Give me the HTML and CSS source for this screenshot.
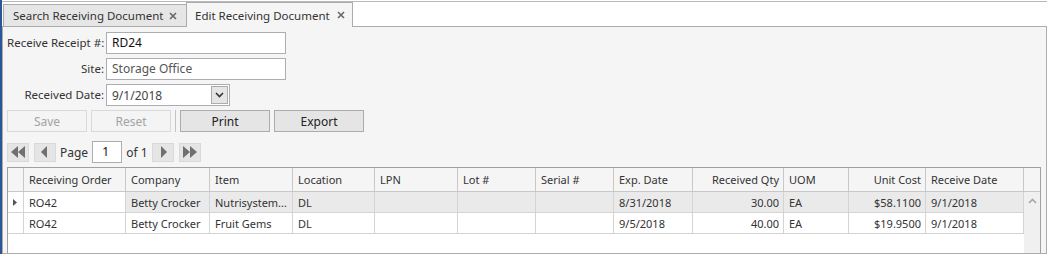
FILE: index.html
```html
<!DOCTYPE html>
<html>
<head>
<meta charset="utf-8">
<link rel="stylesheet" href="styles.css">
</head>
<body>
<div class="app">
  <div class="tabstrip">
    <div class="tab"><span class="tab-title">Search Receiving Document</span>
      <svg class="close" width="8" height="8" viewBox="0 0 8 8"><path d="M1 1L7 7M7 1L1 7" stroke="#666" stroke-width="1.6"/></svg>
    </div>
    <div class="tab active"><span class="tab-title">Edit Receiving Document</span>
      <svg class="close" width="8" height="8" viewBox="0 0 8 8"><path d="M1 1L7 7M7 1L1 7" stroke="#666" stroke-width="1.6"/></svg>
    </div>
  </div>
  <div class="panel">
    <div class="form">
      <label class="lbl">Receive Receipt #:</label>
      <div class="input">RD24</div>
      <label class="lbl">Site:</label>
      <div class="input ro">Storage Office</div>
      <label class="lbl">Received Date:</label>
      <div class="combo">
        <span class="combo-text">9/1/2018</span>
        <span class="dd"><svg width="9" height="6" viewBox="0 0 9 6"><path d="M1 1L4.5 4.5L8 1" fill="none" stroke="#333" stroke-width="1.6"/></svg></span>
      </div>
    </div>
    <div class="toolbar">
      <button class="btn" disabled>Save</button>
      <button class="btn" disabled>Reset</button>
      <span class="sep"></span>
      <button class="btn wide">Print</button>
      <button class="btn wide">Export</button>
    </div>
    <div class="pager">
      <span class="pbtn"><svg width="16" height="12" viewBox="0 0 16 12"><path d="M8 0V12L1 6Z M15 0V12L8 6Z" fill="#707070"/></svg></span>
      <span class="pbtn"><svg width="10" height="12" viewBox="0 0 10 12"><path d="M7 0V12L1 6Z" fill="#707070"/></svg></span>
      <span class="ptext">Page</span>
      <span class="pinput">1</span>
      <span class="ptext">of 1</span>
      <span class="pbtn"><svg width="10" height="12" viewBox="0 0 10 12"><path d="M3 0V12L9 6Z" fill="#707070"/></svg></span>
      <span class="pbtn"><svg width="16" height="12" viewBox="0 0 16 12"><path d="M1 0V12L8 6Z M8 0V12L15 6Z" fill="#707070"/></svg></span>
    </div>
    <div class="grid">
      <div class="row head">
        <div class="cell"></div>
        <div class="cell">Receiving Order</div>
        <div class="cell">Company</div>
        <div class="cell">Item</div>
        <div class="cell">Location</div>
        <div class="cell">LPN</div>
        <div class="cell">Lot #</div>
        <div class="cell">Serial #</div>
        <div class="cell">Exp. Date</div>
        <div class="cell num">Received Qty</div>
        <div class="cell">UOM</div>
        <div class="cell num">Unit Cost</div>
        <div class="cell">Receive Date</div>
        <div class="cell filler"></div>
      </div>
      <div class="body">
        <div class="rows">
          <div class="row data selected">
            <div class="cell ind"><svg width="4" height="7" viewBox="0 0 4 7"><path d="M0 0L4 3.5L0 7Z" fill="#555"/></svg></div>
            <div class="cell current">RO42</div>
            <div class="cell">Betty Crocker</div>
            <div class="cell">Nutrisystem...</div>
            <div class="cell">DL</div>
            <div class="cell"></div>
            <div class="cell"></div>
            <div class="cell"></div>
            <div class="cell">8/31/2018</div>
            <div class="cell num">30.00</div>
            <div class="cell">EA</div>
            <div class="cell num">$58.1100</div>
            <div class="cell">9/1/2018</div>
          </div>
          <div class="row data">
            <div class="cell ind"></div>
            <div class="cell">RO42</div>
            <div class="cell">Betty Crocker</div>
            <div class="cell">Fruit Gems</div>
            <div class="cell">DL</div>
            <div class="cell"></div>
            <div class="cell"></div>
            <div class="cell"></div>
            <div class="cell">9/5/2018</div>
            <div class="cell num">40.00</div>
            <div class="cell">EA</div>
            <div class="cell num">$19.9500</div>
            <div class="cell">9/1/2018</div>
          </div>
        </div>
        <div class="vscroll">
          <svg width="9" height="6" viewBox="0 0 9 6"><path d="M1 5L4.5 1.5L8 5" fill="none" stroke="#a6a6a6" stroke-width="1.6"/></svg>
        </div>
      </div>
    </div>
  </div>
</div>
</body>
</html>
```
FILE: styles.css
```css
* { box-sizing: border-box; }
html, body { margin: 0; padding: 0; }
body {
  width: 1047px;
  height: 254px;
  overflow: hidden;
  background: #fff;
  font-family: "Noto Sans", "Open Sans", sans-serif;
  font-size: 11px;
  color: #333;
}
.app {
  height: 254px;
  border-left: 2px solid #2b579a;
  display: flex;
  flex-direction: column;
}
.tabstrip {
  margin-top: 1px;
  height: 25px;
  border-top: 1px solid #b9b9b9;
  display: flex;
  align-items: flex-end;
  padding-left: 1px;
}
.tab {
  height: 22px;
  width: 184px;
  background: #e6e6e6;
  border: 1px solid #acacac;
  border-bottom: none;
  display: flex;
  align-items: center;
  padding-left: 9px;
  font-size: 11.5px;
  color: #333;
  white-space: nowrap;
}
.tab-title { flex: 1; }
.tab .close { margin-right: 9px; flex: none; }
.tab.active {
  width: 167px;
  height: 25px;
  margin-left: -1px;
  margin-bottom: -1px;
  background: #f5f5f5;
  position: relative;
  z-index: 1;
  padding-left: 8px;
}
.tab.active .close { margin-right: 7px; }
.panel {
  flex: 1;
  background: #f5f5f5;
  border: 1px solid #acacac;
  padding: 5px 5px 0 4px;
  display: flex;
  flex-direction: column;
  min-height: 0;
}
.form {
  display: grid;
  grid-template-columns: 97px auto;
  column-gap: 2px;
  row-gap: 4px;
  justify-content: start;
}
.lbl {
  text-align: right;
  line-height: 22px;
  white-space: nowrap;
  font-size: 11.5px;
}
.input {
  width: 180px;
  height: 22px;
  background: #fff;
  border: 1px solid #abadb3;
  padding-left: 5px;
  line-height: 20px;
  color: #111;
  font-size: 12px;
}
.input.ro { color: #555; }
.combo {
  width: 124px;
  height: 22px;
  background: #fff;
  border: 1px solid #abadb3;
  display: flex;
  align-items: center;
  padding-left: 5px;
  font-size: 12px;
  color: #444;
}
.combo-text { flex: 1; }
.dd {
  width: 17px;
  height: 18px;
  margin-right: 1px;
  border: 1px solid #acacac;
  background: #e5e5e5;
  display: flex;
  align-items: center;
  justify-content: center;
}
.toolbar {
  margin-top: 4px;
  display: flex;
  align-items: center;
  gap: 4px;
  height: 22px;
}
.btn {
  width: 80px;
  height: 22px;
  font-family: inherit;
  font-size: 12px;
  background: #e5e5e5;
  border: 1px solid #acacac;
  color: #222;
  padding: 0;
}
.btn:disabled {
  background: #f4f4f4;
  border-color: #d9d9d9;
  color: #a3a3a3;
}
.btn.wide { width: 90px; }
.sep {
  width: 1px;
  height: 22px;
  background: #c4c4c4;
}
.pager {
  margin-top: 9px;
  height: 22px;
  display: flex;
  align-items: center;
  gap: 5px;
}
.pbtn {
  width: 22px;
  height: 19px;
  background: #e5e5e5;
  border: 1px solid #d9d9d9;
  display: flex;
  align-items: center;
  justify-content: center;
}
.ptext { font-size: 12px; margin: 0 -1px; }
.pinput {
  width: 30px;
  height: 22px;
  background: #fff;
  border: 1px solid #abadb3;
  line-height: 20px;
  padding-left: 9px;
  font-size: 12px;
  color: #111;
}
.grid {
  margin-top: 4px;
  flex: 1;
  background: #fff;
  border: 1px solid #a0a0a0;
  border-bottom: none;
  display: flex;
  flex-direction: column;
  min-height: 0;
}
.row {
  display: grid;
  grid-template-columns: 16px 102px 84px 83px 82px 83px 78px 78px 79px 91px 65px 77px 98px;
}
.row.head {
  grid-template-columns: 16px 102px 84px 83px 82px 83px 78px 78px 79px 91px 65px 77px 98px 16px;
  height: 24px;
  background: #f5f5f5;
  border-bottom: 1px solid #c8c8c8;
}
.cell {
  border-right: 1px solid #c8c8c8;
  padding: 0 5px;
  white-space: nowrap;
  overflow: hidden;
  display: flex;
  align-items: center;
}
.cell.num { justify-content: flex-end; padding-right: 4px; }
.cell.filler { border-right: none; }
.row.data { height: 21px; border-bottom: 1px solid #d4d4d4; }
.row.data .cell { border-right-color: #d4d4d4; }
.row.selected .cell { background: #eaeaea; }
.row.selected .cell.current, .row.selected .cell.ind { background: #fff; }
.cell.ind { padding: 0 0 0 5px; }
.body {
  flex: 1;
  display: flex;
  min-height: 0;
}
.rows { width: 1016px; }
.vscroll {
  width: 16px;
  background: #f0f0f0;
  display: flex;
  justify-content: center;
  padding-top: 6px;
  align-items: flex-start;
}
```
